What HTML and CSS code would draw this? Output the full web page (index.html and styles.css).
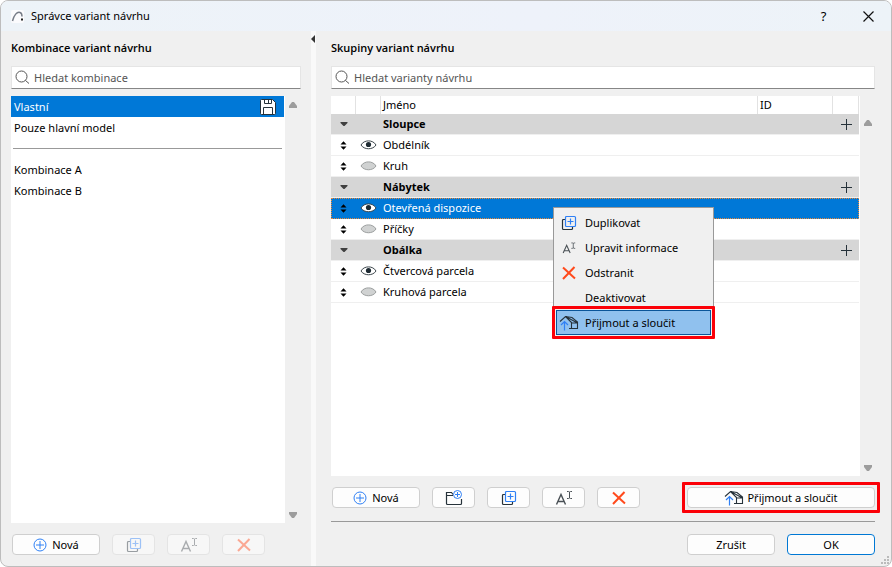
FILE: index.html
```html
<!DOCTYPE html>
<html lang="cs">
<head>
  <meta charset="UTF-8">
  <meta name="viewport" content="width=device-width, initial-scale=1.0">
  <title>Správce variant návrhu</title>
  <link rel="stylesheet" href="styles.css">
</head>
<body>
  <!-- shared icons -->
  <svg class="sprite" aria-hidden="true">
    <symbol id="i-search" viewBox="0 0 16 16"><circle cx="6.5" cy="6.5" r="5.5" fill="none" stroke="#555"/><path d="M10.4 10.4 14 13.5" stroke="#555" fill="none"/></symbol>
    <symbol id="i-add" viewBox="0 0 14 14"><circle cx="7" cy="7" r="6" fill="none" stroke="#2f80f5"/><path d="M7 3v8M3 7h8" stroke="#2f80f5"/></symbol>
    <symbol id="i-copy" viewBox="0 0 16 16"><path d="M4 4.5H2.5a1 1 0 0 0-1 1v8a1 1 0 0 0 1 1h8a1 1 0 0 0 1-1V12" fill="none" stroke="#26323a" stroke-width="1.2"/><rect x="4.5" y="1.5" width="10" height="10" rx="1" fill="none" stroke="#2f80f5" stroke-width="1.2"/><path d="M9.5 3.5v6M6.5 6.5h6" stroke="#2f80f5" stroke-width="1.2"/></symbol>
    <symbol id="i-rename" viewBox="0 0 18 16"><path d="M1.5 14.5 6 4.5l4.500 10M3 11.5h6" fill="none" stroke="#4a5156" stroke-width="1.4"/><path d="M12 1.500h1.500l1 .5 1-.5H17M12 8.500h1.500l1-.5 1 .5H17M14.500 2v6" fill="none" stroke="#4a5156"/></symbol>
    <symbol id="i-delete" viewBox="0 0 16 16"><path d="M2 2.5 14 13.5M13.5 2 2 14" fill="none" stroke="#ff4a1c" stroke-width="2"/></symbol>
    <symbol id="i-folder" viewBox="0 0 18 16"><path d="M8 5.500H1.500v8a1 1 0 0 0 1 1h13a1 1 0 0 0 1-1V9M1.500 5.500v-3h5l1.500 2" fill="none" stroke="#26323a" stroke-width="1.2"/><circle cx="12.5" cy="4.5" r="4" fill="#fdfdfd" stroke="#2f80f5"/><path d="M12.5 2v5M10 4.500h5" stroke="#2f80f5"/></symbol>
    <symbol id="i-merge" viewBox="0 0 20 16"><path d="M1 6.5 6.500 1.500 13 2.500 18.500 7v6.500H10M6.500 1.500 12.500 7.500v6M6.500 1.500 18.500 8M12.500 8h6" fill="none" stroke="#26323a" stroke-width="1.1"/><path d="M5.500 15.500v-9M2 10l3.500-3.500L9 10" fill="none" stroke="#2f80f5" stroke-width="1.2"/></symbol>
    <symbol id="i-eye" viewBox="0 0 17 12"><path d="M1 6C4 .5 13 .5 16 6 13 11 4 11 1 6Z" fill="#fff" stroke="#3c464c"/><circle cx="8.5" cy="5.5" r="2.6" fill="#1e2b33"/></symbol>
    <symbol id="i-hidden" viewBox="0 0 17 12"><path d="M1 6C4 .5 13 .5 16 6 13 11 4 11 1 6Z" fill="#d0d2d2" stroke="#9b9e9e"/></symbol>
    <symbol id="i-move" viewBox="0 0 7 9"><path d="M.5 3.500h6L3.500 0.200ZM.5 5.500h6L3.500 8.800Z"/></symbol>
    <symbol id="i-down" viewBox="0 0 8 6"><path d="M0 0h8v2L5 6H3L0 2Z"/></symbol>
    <symbol id="i-fold" viewBox="0 0 8 6"><path d="M.5 1h7v1L4.500 5h-1L.5 2Z"/></symbol>
    <symbol id="i-plus" viewBox="0 0 13 13"><path d="M6.5 1v11M1 6.500h11" stroke="#26323a"/></symbol>
  </svg>

  <div class="window">
    <header class="titlebar">
      <svg class="app-icon" width="13" height="13" viewBox="0 0 13 13"><rect width="13" height="13" rx="2" fill="#fbfbfd"/><path d="M1.500 11C3 5 6 1.500 9 2.500c1.500.5 2 2 2 4" fill="none" stroke="#777d88" stroke-width="1.5"/><path d="M11 8.500v2" stroke="#222" stroke-width="2"/></svg>
      <h1>Správce variant návrhu</h1>
      <button class="title-btn" aria-label="Nápověda">?</button>
      <button class="title-btn" aria-label="Zavřít"><svg width="11" height="11" viewBox="0 0 11 11"><path d="M.5.5l10 10M10.500.5l-10 10" stroke="#111" stroke-width="1.2"/></svg></button>
    </header>

    <main class="content">
      <section class="pane left">
        <h2>Kombinace variant návrhu</h2>
        <label class="search">
          <svg width="16" height="16"><use href="#i-search"/></svg>
          <input type="text" placeholder="Hledat kombinace" aria-label="Hledat kombinace">
        </label>
        <div class="scroll-area">
          <ul class="list">
            <li class="selected">Vlastní
              <svg width="16" height="16" viewBox="0 0 16 16"><path d="M.5 1.500a1 1 0 0 1 1-1h11l3 3v11a1 1 0 0 1-1 1h-13a1 1 0 0 1-1-1Z" fill="#fff" stroke="#26323a"/><path d="M4.500.5v4h7v-4M8.500 1v3M3.500 15.500v-7h9v7" fill="none" stroke="#26323a"/></svg>
            </li>
            <li>Pouze hlavní model</li>
            <li class="separator"><hr></li>
            <li>Kombinace A</li>
            <li>Kombinace B</li>
          </ul>
          <div class="scrollbar">
            <svg class="up" width="8" height="6"><use href="#i-down"/></svg>
            <svg width="8" height="6"><use href="#i-down"/></svg>
          </div>
        </div>
        <div class="buttons">
          <button class="btn wide"><svg width="14" height="14"><use href="#i-add"/></svg>Nová</button>
          <button class="btn" disabled aria-label="Duplikovat"><svg width="16" height="16"><use href="#i-copy"/></svg></button>
          <button class="btn" disabled aria-label="Upravit informace"><svg width="18" height="16"><use href="#i-rename"/></svg></button>
          <button class="btn" disabled aria-label="Odstranit"><svg width="16" height="16"><use href="#i-delete"/></svg></button>
        </div>
      </section>

      <div class="splitter"><svg width="4" height="8" viewBox="0 0 4 8"><path d="M4 0v8L0 4Z" fill="#333"/></svg></div>

      <section class="pane right">
        <h2>Skupiny variant návrhu</h2>
        <label class="search">
          <svg width="16" height="16"><use href="#i-search"/></svg>
          <input type="text" placeholder="Hledat varianty návrhu" aria-label="Hledat varianty návrhu">
        </label>
        <div class="scroll-area">
          <div class="table-wrap">
            <table>
              <colgroup><col class="c-icon"><col class="c-icon"><col><col class="c-id"><col class="c-add"></colgroup>
              <thead>
                <tr><th></th><th></th><th>Jméno</th><th>ID</th><th></th></tr>
              </thead>
              <tbody>
                <tr class="group"><td><svg class="fold" width="8" height="6"><use href="#i-fold"/></svg></td><td></td><td>Sloupce</td><td></td><td><button class="add" aria-label="Přidat"><svg width="13" height="13"><use href="#i-plus"/></svg></button></td></tr>
                <tr><td><svg width="7" height="9"><use href="#i-move"/></svg></td><td><svg width="17" height="12"><use href="#i-eye"/></svg></td><td>Obdélník</td><td></td><td></td></tr>
                <tr><td><svg width="7" height="9"><use href="#i-move"/></svg></td><td><svg width="17" height="12"><use href="#i-hidden"/></svg></td><td>Kruh</td><td></td><td></td></tr>
                <tr class="group"><td><svg class="fold" width="8" height="6"><use href="#i-fold"/></svg></td><td></td><td>Nábytek</td><td></td><td><button class="add" aria-label="Přidat"><svg width="13" height="13"><use href="#i-plus"/></svg></button></td></tr>
                <tr class="selected"><td><svg width="7" height="9"><use href="#i-move"/></svg></td><td><svg width="17" height="12"><use href="#i-eye"/></svg></td><td>Otevřená dispozice</td><td></td><td></td></tr>
                <tr><td><svg width="7" height="9"><use href="#i-move"/></svg></td><td><svg width="17" height="12"><use href="#i-hidden"/></svg></td><td>Příčky</td><td></td><td></td></tr>
                <tr class="group"><td><svg class="fold" width="8" height="6"><use href="#i-fold"/></svg></td><td></td><td>Obálka</td><td></td><td><button class="add" aria-label="Přidat"><svg width="13" height="13"><use href="#i-plus"/></svg></button></td></tr>
                <tr><td><svg width="7" height="9"><use href="#i-move"/></svg></td><td><svg width="17" height="12"><use href="#i-eye"/></svg></td><td>Čtvercová parcela</td><td></td><td></td></tr>
                <tr><td><svg width="7" height="9"><use href="#i-move"/></svg></td><td><svg width="17" height="12"><use href="#i-hidden"/></svg></td><td>Kruhová parcela</td><td></td><td></td></tr>
              </tbody>
            </table>

            <div class="menu" role="menu">
              <button role="menuitem"><svg width="16" height="16"><use href="#i-copy"/></svg><span>Duplikovat</span></button>
              <button role="menuitem"><svg width="14" height="14"><use href="#i-rename"/></svg><span>Upravit informace</span></button>
              <button role="menuitem"><svg width="16" height="16"><use href="#i-delete"/></svg><span>Odstranit</span></button>
              <button role="menuitem"><span>Deaktivovat</span></button>
              <button role="menuitem" class="active marked"><svg width="20" height="16"><use href="#i-merge"/></svg><span>Přijmout a sloučit</span></button>
            </div>
          </div>
          <div class="scrollbar below-head">
            <svg class="up" width="8" height="6"><use href="#i-down"/></svg>
            <svg width="8" height="6"><use href="#i-down"/></svg>
          </div>
        </div>
        <div class="buttons">
          <button class="btn wide"><svg width="14" height="14"><use href="#i-add"/></svg>Nová</button>
          <button class="btn" aria-label="Nová skupina"><svg width="18" height="16"><use href="#i-folder"/></svg></button>
          <button class="btn" aria-label="Duplikovat"><svg width="16" height="16"><use href="#i-copy"/></svg></button>
          <button class="btn" aria-label="Upravit informace"><svg width="18" height="16"><use href="#i-rename"/></svg></button>
          <button class="btn" aria-label="Odstranit"><svg width="16" height="16"><use href="#i-delete"/></svg></button>
          <button class="btn merge marked"><svg width="20" height="16"><use href="#i-merge"/></svg>Přijmout a sloučit</button>
        </div>
        <hr class="rule">
        <div class="buttons end">
          <button class="btn wide">Zrušit</button>
          <button class="btn wide primary">OK</button>
        </div>
      </section>
    </main>
    <svg class="grip" width="8" height="8" viewBox="0 0 8 8"><path d="M6 0h2v2H6zM3 3h2v2H3zM6 3h2v2H6zM0 6h2v2H0zM3 6h2v2H3zM6 6h2v2H6z" fill="#bbb"/></svg>
  </div>
</body>
</html>
```

FILE: styles.css
```css
* {
  box-sizing: border-box;
}

body {
  margin: 0;
  font-family: "Noto Sans", "Open Sans", sans-serif;
  font-size: 11px;
  line-height: 16px;
  color: #000;
  background: #fff;
}

button,
input {
  font: inherit;
  color: inherit;
}

h1,
h2,
ul,
hr {
  margin: 0;
  padding: 0;
}

svg {
  flex: none;
  display: block;
}

.sprite {
  position: absolute;
  width: 0;
  height: 0;
}

.window {
  position: relative;
  display: flex;
  flex-direction: column;
  height: 100vh;
  background: #f0f0f0;
  border: 1px solid #bdbdbd;
  border-radius: 8px;
  overflow: hidden;
}

/* title bar */
.titlebar {
  display: flex;
  align-items: center;
  height: 30px;
  padding-left: 10px;
  background: linear-gradient(90deg, #edf3f8, #eef2fa 60%, #edf3f8);
}

.titlebar h1 {
  flex: 1;
  margin-left: 7px;
  font-size: 11px;
  font-weight: normal;
}

.title-btn {
  display: flex;
  align-items: center;
  justify-content: center;
  width: 45px;
  height: 30px;
  padding: 0;
  border: none;
  background: none;
  font-size: 13px;
}

/* panes */
.content {
  flex: 1;
  display: grid;
  grid-template-columns: 310px 5px 1fr;
  min-height: 0;
}

.pane {
  display: flex;
  flex-direction: column;
  min-height: 0;
  padding: 9px 10px 11px;
}

.pane.right {
  padding-left: 15px;
  padding-right: 16px;
}

.pane h2 {
  margin-bottom: 10px;
  font-family: "Open Sans", "Noto Sans", sans-serif;
  font-size: 11px;
  font-weight: 600;
}

.splitter {
  background: #f9f9f9;
  padding-top: 4px;
}

.search {
  display: flex;
  align-items: center;
  gap: 3px;
  height: 23px;
  margin-bottom: 7px;
  padding-left: 3px;
  background: #fff;
  border: 1px solid #e5e5e5;
  border-bottom-color: #868686;
}

.search input {
  flex: 1;
  min-width: 0;
  padding: 0;
  border: none;
  outline: none;
  background: none;
}

.search input::placeholder {
  color: #555;
}

.scroll-area {
  flex: 1;
  display: flex;
  min-height: 0;
  margin-bottom: 11px;
}

.scrollbar {
  display: flex;
  flex-direction: column;
  justify-content: space-between;
  align-items: center;
  width: 15px;
  padding: 6px 0 5px;
  fill: #9d9d9d;
}

.left .scrollbar {
  width: 16px;
}

.scrollbar.below-head {
  padding-top: 24px;
}

.up {
  transform: rotate(180deg);
}

/* combinations list */
.list {
  flex: 1;
  padding-right: 1px;
  list-style: none;
  background: #fff;
}

.list li {
  display: flex;
  align-items: center;
  justify-content: space-between;
  height: 21px;
  padding: 0 8px 0 3px;
}

.list .selected,
tr.selected {
  background: #0078d7;
  color: #fff;
}

.list .separator {
  padding: 0 2px;
}

hr {
  width: 100%;
  border: none;
  border-top: 1px solid #999;
}

/* groups table */
.table-wrap {
  position: relative;
  flex: 1;
  background: #fff;
}

table {
  width: calc(100% - 1px);
  table-layout: fixed;
  border-collapse: collapse;
}

.c-icon {
  width: 25px;
}

.c-id {
  width: 75px;
}

.c-add {
  width: 26px;
}

th {
  height: 18px;
  padding: 0 2px;
  text-align: left;
  font-weight: normal;
  box-shadow: inset -1px 0 #e2e2e2;
}

td {
  height: 21px;
  padding: 0 2px 1px;
  box-shadow: inset 0 -1px #efefef;
}

td svg {
  margin: 0 auto;
}

.group {
  background: #d6d6d6;
  font-family: "Open Sans", "Noto Sans", sans-serif;
  font-weight: 700;
}

.fold {
  fill: #404040;
}

tr.selected {
  outline: 1px dotted #e8883a;
  outline-offset: -1px;
}

tr.selected td {
  box-shadow: none;
}

td:first-child svg {
  color: #000;
}

.add {
  display: block;
  width: 100%;
  padding: 0;
  border: none;
  background: none;
}

/* context menu */
.menu {
  position: absolute;
  top: 111px;
  left: 222px;
  display: flex;
  flex-direction: column;
  width: 161px;
  padding: 2px;
  background: #f0f0f0;
  border: 1px solid #999;
}

.menu button {
  display: grid;
  grid-template-columns: 24px 1fr;
  align-items: center;
  gap: 4px;
  height: 25px;
  padding: 1px 0 0;
  border: 1px solid transparent;
  background: none;
  text-align: left;
  white-space: nowrap;
}

.menu svg {
  justify-self: center;
}

.menu span {
  grid-column: 2;
}

.menu .active {
  background: #90c1ee;
  border-color: #0a5599;
}

/* push buttons */
.buttons {
  display: flex;
  gap: 12px;
  padding-left: 1px;
}

.buttons.end {
  justify-content: flex-end;
}

.btn {
  display: flex;
  align-items: center;
  justify-content: center;
  gap: 5px;
  width: 43px;
  height: 21px;
  padding: 0;
  background: #fdfdfd;
  border: 1px solid #cfcfcf;
  border-radius: 4px;
}

.btn.wide {
  width: 88px;
}

.btn.merge {
  width: 188px;
  margin-left: auto;
  gap: 3px;
}

.btn.primary {
  border-color: #0078d4;
}

.btn:disabled {
  background: #f7f7f7;
  border-color: #e4e4e4;
}

.btn:disabled svg {
  opacity: 0.45;
}

.rule {
  margin: 13px 0 12px;
}

/* red callout frame */
.marked {
  position: relative;
}

.marked::after {
  content: "";
  position: absolute;
  inset: -6px;
  border: 3px solid #fb0007;
  border-radius: 1px;
}

.menu .marked::after {
  inset: -5px;
}

.grip {
  position: absolute;
  right: 2px;
  bottom: 2px;
}
```
